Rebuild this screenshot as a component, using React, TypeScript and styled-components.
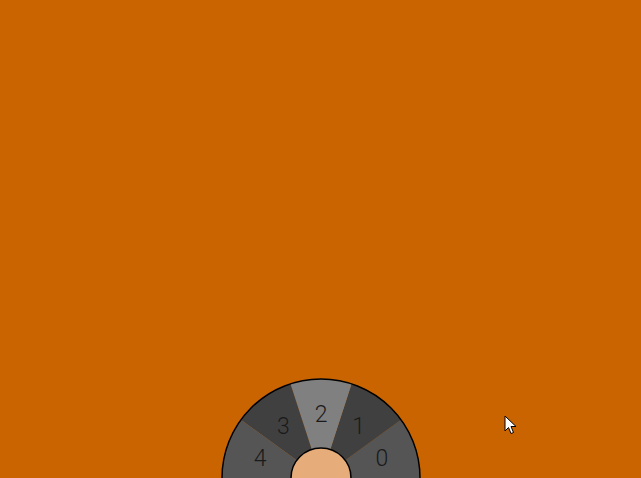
import React from "react";
import styled, { createGlobalStyle } from "styled-components";

const Global = createGlobalStyle`
  html, body { margin: 0; padding: 0; background: #c96400; }
  body { font-family: "Liberation Sans", sans-serif; }
`;

const Stage = styled.div`
  position: relative;
  height: 478px;
  overflow: hidden;
  display: flex;
  align-items: flex-end;
  justify-content: center;
  background: #c96400;
`;

const Pie = styled.svg`
  display: block;
  width: 202px;
  height: 101px;
`;

const Label = styled.text`
  font-family: Roboto, "Liberation Sans", sans-serif;
  font-weight: 300;
  font-size: 23px;
  fill: #1a1a1a;
`;

const Cursor = styled.svg`
  position: absolute;
  left: 504px;
  top: 415px;
  width: 14px;
  height: 22px;
`;

const R_OUT = 99;
const R_IN = 30;
const R_LABEL = 64;
const colors = ["#555555", "#404040", "#808080", "#404040", "#555555"];

function sector(i: number) {
  const a0 = (i * 36 * Math.PI) / 180;
  const a1 = ((i + 1) * 36 * Math.PI) / 180;
  const p = (r: number, a: number) => `${(r * Math.cos(a)).toFixed(3)} ${(-r * Math.sin(a)).toFixed(3)}`;
  return `M ${p(R_IN, a0)} L ${p(R_OUT, a0)} A ${R_OUT} ${R_OUT} 0 0 0 ${p(R_OUT, a1)} L ${p(R_IN, a1)} A ${R_IN} ${R_IN} 0 0 1 ${p(R_IN, a0)} Z`;
}

export default function App() {
  return (
    <>
      <Global />
      <Stage>
        <Pie viewBox="-101 -101 202 101">
          {colors.map((c, i) => (
            <path key={i} d={sector(i)} fill={c} />
          ))}
          <circle cx={0} cy={0} r={R_OUT} fill="none" stroke="#000" strokeWidth={1.5} />
          <circle cx={0} cy={0} r={R_IN} fill="#e6ad7a" stroke="#000" strokeWidth={1.5} />
          {colors.map((_, i) => {
            const a = ((i * 36 + 18) * Math.PI) / 180;
            return (
              <Label
                key={i}
                x={R_LABEL * Math.cos(a)}
                y={-R_LABEL * Math.sin(a)}
                textAnchor="middle"
                dominantBaseline="central"
              >
                {i}
              </Label>
            );
          })}
        </Pie>
        <Cursor viewBox="0 0 14 22">
          <path d="M1 1 L1 16 L4.5 12.5 L7 18.5 L9.5 17.5 L7 11.5 L12 11.5 Z" fill="#fff" stroke="#000" strokeWidth={1} strokeLinejoin="round" />
        </Cursor>
      </Stage>
    </>
  );
}
